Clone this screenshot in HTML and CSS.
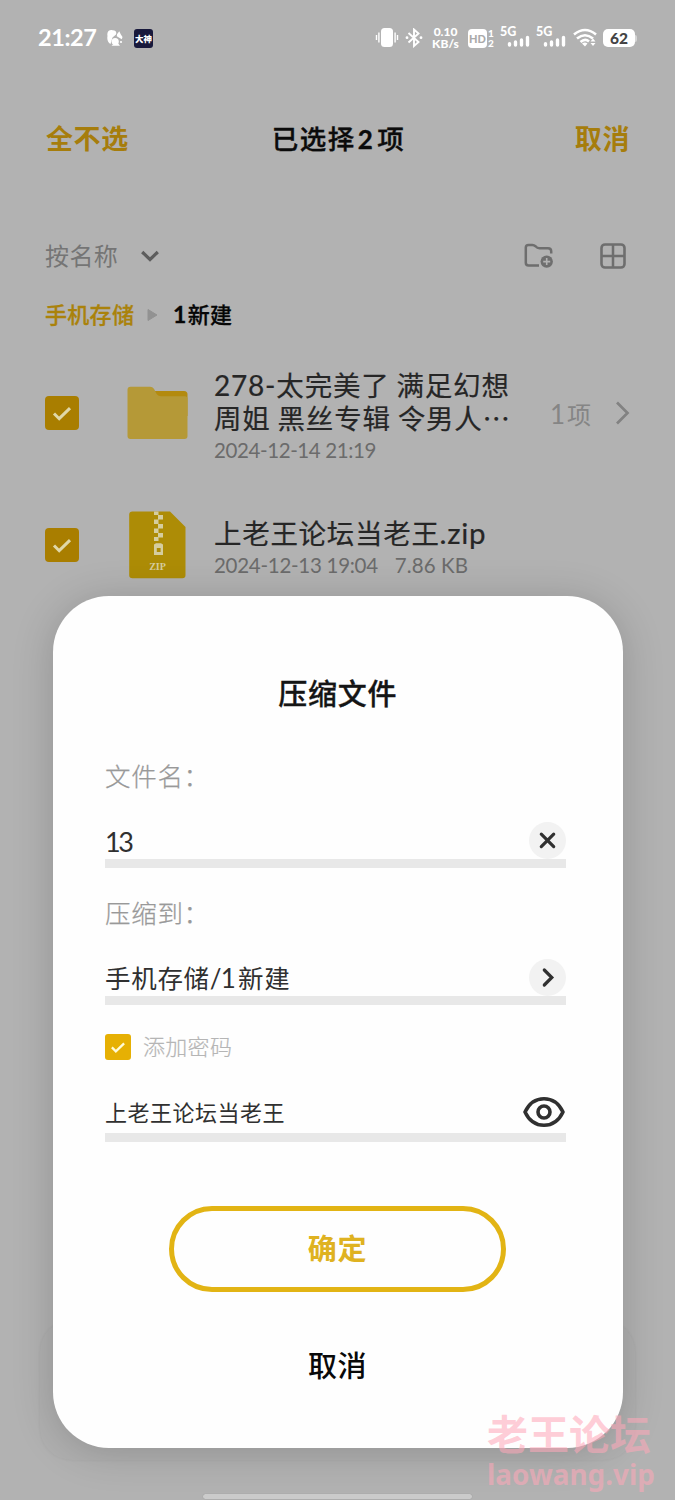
FILE: index.html
```html
<!DOCTYPE html>
<html lang="zh-CN">
<head>
<meta charset="utf-8">
<title>压缩文件</title>
<link rel="stylesheet" href="styles.css">
</head>
<body>
<div class="screen">
  <header class="status">
    <span class="clock">21:27</span>
    <svg class="squirrel" width="16" height="18" viewBox="0 0 16 18"><g fill="#fff"><path d="M.5 7C-.5 2.500 2.500.5 5.500 1.200 8.500 1 10 3 9 5.500L5.500 8.500 3.500 15C.8 13.500-.2 10 .5 7z"/><path d="M10 5.200l2.300-3 1.400 3L15.500 8l-.7 2.200-3-1.600-2-1.400z"/><circle cx="8.200" cy="12.500" r="3.600"/><path d="M4.500 16.700l3-2.500h3.500l2 2.500z"/><circle cx="14" cy="13" r="1.100"/></g></svg>
    <span class="app">大神</span>
    <span class="grow"></span>
    <svg class="vibrate" width="24" height="20" viewBox="0 0 24 20"><rect x="6" width="12" height="19" rx="3.500" fill="#fff"/><path d="M1.500 7v5M3.900 4.500v10M20.100 4.500v10M22.500 7v5" stroke="#fff" stroke-width="1.400"/></svg>
    <svg class="bt" width="18" height="20" viewBox="0 0 18 20"><path d="M3.500 5L13.500 14 9 18V1.500l4.500 4L3.500 14.500" fill="none" stroke="#fff" stroke-width="1.900"/><circle cx="2" cy="9.700" r="1.400" fill="#fff"/><circle cx="16" cy="9.700" r="1.400" fill="#fff"/></svg>
    <span class="speed"><span>0.10</span><span>KB/s</span></span>
    <span class="hd">HD</span>
    <span class="sims"><span>1</span><span>2</span></span>
    <span class="signal"><span class="gen">5G</span><svg width="29" height="20" viewBox="0 0 29 20"><path d="M8.500 15.800v1.200M14.500 14v3M20.500 12v5M26.500 9.500v7.500" stroke="#fff" stroke-width="3.400" stroke-linecap="round"/></svg></span>
    <span class="signal"><span class="gen">5G</span><svg width="29" height="20" viewBox="0 0 29 20"><path d="M8.500 15.800v1.200M14.500 14v3M20.500 12v5M26.500 9.500v7.500" stroke="#fff" stroke-width="3.400" stroke-linecap="round"/></svg></span>
    <svg class="wifi" width="24" height="20" viewBox="0 0 24 20"><g fill="none" stroke="#fff" stroke-width="2.600"><path d="M1 6.500Q12-2.500 23 6.500M4 10.500Q12 4 20 10.500M7.500 14Q12 10 16 13.500"/></g><path d="M9 15.500Q12 13.500 14.500 15.500L12 18.500zM17.500 13.500l2.500-3 2.500 3zM17.500 15l2.500 3 2.500-3z" fill="#fff"/></svg>
    <span class="battery">62</span><i class="nub"></i>
  </header>

  <nav class="header">
    <span class="gold">全不选</span>
    <h1>已选择<span class="num">2</span>项</h1>
    <span class="gold">取消</span>
  </nav>

  <div class="sort">
    <span class="by">按名称</span>
    <svg class="down" width="20" height="14" viewBox="0 0 20 14"><path d="M2.200 3L10 10.500 17.800 3" fill="none" stroke="#5d5d5d" stroke-width="3.200"/></svg>
    <span class="grow"></span>
    <svg class="newfolder" width="30" height="26" viewBox="0 0 30 26"><path d="M15 22.500H4.500Q1.800 22.500 1.800 19.800V4.500Q1.800 1.900 4.500 1.900H8.500Q10 1.900 11.500 3.200Q13.200 5.200 15.500 5.200H24Q27.200 5.200 27.200 8.200V10.500" fill="none" stroke="#6e6e6e" stroke-width="2.500"/><circle cx="22.700" cy="18.600" r="6.200" fill="#6e6e6e"/><path d="M19.200 18.600h7M22.700 15.100v7" stroke="#b2b2b2" stroke-width="1.600"/></svg>
    <svg width="26" height="26" viewBox="0 0 26 26"><rect x="1.500" y="1.500" width="23" height="23" rx="3.500" fill="none" stroke="#6e6e6e" stroke-width="2.600"/><path d="M13 2v22M2 13h22" stroke="#6e6e6e" stroke-width="2.500"/></svg>
  </div>

  <div class="crumbs">
    <span class="root">手机存储</span>
    <svg width="11" height="14" viewBox="0 0 11 14"><path d="M1 1.500L10 7 1 12.500z" fill="#929292" stroke="#929292" stroke-linejoin="round"/></svg>
    <span class="here"><span class="num">1</span>新建</span>
  </div>

  <main>
    <div class="file">
      <svg class="check" width="34" height="34" viewBox="0 0 34 34"><rect width="34" height="34" rx="4" fill="#a97e00"/><path d="M9 17.500l5.200 5.200L25 12.200" fill="none" stroke="#e0d8a8" stroke-width="3"/></svg>
      <svg class="thumb" width="61" height="54" viewBox="0 0 61 54"><path d="M24 5h33q3.500 0 3.500 3.500V30H24z" fill="#b38a0e"/><path d="M3 .8H23q3 0 4.500 3l2 4q1.300 2.400 4 2.400H58q2.500 0 2.500 2.500V50q0 3-3 3H3.500q-3 0-3-3V3.800q0-3 3-3z" fill="#b59937"/></svg>
      <div class="info">
        <div class="name"><span class="num">278-</span>太完美了 满足幻想</div>
        <div class="name">周姐 黑丝专辑 令男人⋯</div>
        <div class="meta">2024-12-14 21:19</div>
      </div>
      <span class="count"><span class="num">1</span>项</span>
      <svg width="16" height="24" viewBox="0 0 16 24"><path d="M2 1.500L12.500 12 2 22.500" fill="none" stroke="#828282" stroke-width="2.700"/></svg>
    </div>
    <div class="file">
      <svg class="check" width="34" height="34" viewBox="0 0 34 34"><rect width="34" height="34" rx="4" fill="#a97e00"/><path d="M9 17.500l5.200 5.200L25 12.200" fill="none" stroke="#e0d8a8" stroke-width="3"/></svg>
      <svg class="thumb" width="61" height="68" viewBox="0 0 61 68"><path d="M5.500.5H43L58.500 16V64q0 3.200-3.200 3.200H5.500q-3.300 0-3.300-3.300V3.800Q2.200.5 5.500.5z" fill="#ad8c06"/><g fill="#d5cd9f"><path d="M27 .5h4.500V4h4.500v4.500h-4.500V13h4.500v4.500h-4.500V22h4.500v4.500h-4.500V30H27v-4h4v-4h-4v-4.500h4V13h-4V8.500h4V4h-4z"/><path fill-rule="evenodd" d="M27 33.500l2-1.200h5l2 1.200V44h-9zM29.800 37v4h3.800v-4z"/></g><text x="30.500" y="58.500" text-anchor="middle" class="zip">ZIP</text></svg>
      <div class="info">
        <div class="name second">上老王论坛当老王<span class="num">.zip</span></div>
        <div class="meta wide">2024-12-13 19:04 <span class="size">7.86 KB</span></div>
      </div>
    </div>
  </main>

  <div class="dock"></div>
  <section class="dialog">
    <h2>压缩文件</h2>
    <div class="label">文件名：</div>
    <div class="field">
      <span class="num">13</span>
      <svg width="37" height="37" viewBox="0 0 37 37"><circle cx="18.500" cy="18.500" r="18.500" fill="#f2f2f2"/><path d="M12.300 12.200l12.400 12.400M24.700 12.200L12.300 24.600" stroke="#303030" stroke-width="3.200" stroke-linecap="round"/></svg>
    </div>
    <div class="label to">压缩到：</div>
    <div class="field target">
      <span>手机存储<span class="num path">/1</span>新建</span>
      <svg width="37" height="37" viewBox="0 0 37 37"><circle cx="18.500" cy="18.500" r="18.500" fill="#f2f2f2"/><path d="M15.300 11l7.500 7.500-7.500 7.500" fill="none" stroke="#303030" stroke-width="3.200" stroke-linecap="round"/></svg>
    </div>
    <div class="option">
      <svg width="26" height="26" viewBox="0 0 34 34"><rect width="34" height="34" rx="4" fill="#e6b004"/><path d="M9 17.500l5.200 5.200L25 12.200" fill="none" stroke="#fffbd8" stroke-width="3"/></svg>
      <span>添加密码</span>
    </div>
    <div class="field password">
      <span>上老王论坛当老王</span>
      <svg width="42" height="32" viewBox="0 0 42 32"><path d="M2 16C6 7.500 13 2.700 21 2.700S36 7.500 40 16C36 24.500 29 29.300 21 29.300S6 24.500 2 16z" fill="none" stroke="#303030" stroke-width="3.600" stroke-linejoin="round"/><circle cx="21" cy="16" r="6" fill="none" stroke="#303030" stroke-width="3.600"/></svg>
    </div>
    <div class="ok">确定</div>
    <div class="cancel">取消</div>
  </section>

  <div class="homebar"></div>
  <div class="watermark"><span>老王论坛</span><span class="site">laowang.vip</span></div>
</div>
</body>
</html>
```

FILE: styles.css
```css
* { box-sizing: border-box; }
body { margin: 0; font-family: "Noto Sans CJK SC", sans-serif; }
.screen { position: relative; width: 675px; height: 1500px; overflow: hidden; background: #b2b2b2; }
svg { flex: none; display: block; }
span, h1, h2, div { white-space: nowrap; }
h1, h2 { margin: 0; }
.grow { flex: 1; }
.num { font-family: Lato, sans-serif; }

.status { display: flex; align-items: center; height: 76px; padding: 0 38px; color: #fff; font-family: Lato, sans-serif; }
.clock { width: 60px; padding-bottom: 2px; font-size: 23.500px; font-weight: 700; line-height: 28px; letter-spacing: -.4px; }
.squirrel { margin-left: 9px; }
.app { width: 19px; height: 19px; margin-left: 11px; border-radius: 3px; background: #18193c; font: 900 8.500px/18px "Noto Sans CJK SC", sans-serif; text-align: center; }
.vibrate { margin-right: 6px; }
.bt { margin-right: 8px; }
.speed { display: flex; flex-direction: column; width: 29px; font-size: 12px; font-weight: 900; line-height: 12px; text-align: center; }
.hd { width: 19px; height: 19px; margin-left: 8px; border-radius: 4px; background: #fff; color: #aaa; font-size: 11px; font-weight: 900; line-height: 19px; text-align: center; }
.sims { display: flex; flex-direction: column; width: 8px; font-size: 10px; font-weight: 900; line-height: 10px; text-align: center; }
.signal { position: relative; margin-left: 6px; }
.signal + .signal { margin-left: 7px; }
.gen { position: absolute; left: -1px; top: -2px; font-size: 12.500px; font-weight: 900; line-height: 12px; }
.wifi { margin-left: 7px; }
.battery { width: 32px; height: 18px; margin-left: 6px; border-radius: 5px; background: #fff; color: #444; font-size: 15.500px; font-weight: 900; line-height: 18px; text-align: center; }
.nub { width: 2px; height: 7px; background: #d5d5d5; border-radius: 0 2px 2px 0; }

.header { display: grid; grid-template-columns: 1fr auto 1fr; align-items: center; height: 126px; padding: 0 45px 2px 46px; font-size: 27px; font-weight: 700; letter-spacing: .6px; line-height: 40px; }
.header h1 { padding-left: 1px; font-size: 26.500px; font-weight: 500; letter-spacing: 1.500px; color: #0b0b0b; -webkit-text-stroke: .35px; }
.header h1 .num { margin: 0 3px 0 2px; font-weight: 700; font-size: 26px; }
.gold { color: #a67d0c; }
.gold:last-child { justify-self: end; }

.sort { display: flex; align-items: center; height: 60px; margin-top: 24px; padding: 0 49px 0 45px; font-size: 24px; letter-spacing: .4px; color: #757575; }
.by { padding-bottom: 4px; }
.down { margin-left: 22px; }
.newfolder { margin-right: 46px; }

.crumbs { display: flex; align-items: center; height: 40px; margin-top: 9px; padding-left: 45px; font-size: 22px; font-weight: 500; letter-spacing: .3px; line-height: 30px; }
.root { width: 90px; padding-bottom: 4px; color: #aa820b; -webkit-text-stroke: .3px; }
.crumbs svg { margin: 0 14px 0 12px; }
.here { padding: 0 0 4px 1px; color: #060606; -webkit-text-stroke: .3px; }
.here .num { font-weight: 700; font-size: 23px; margin-right: 1px; }

main { margin-top: 12px; }
.file { display: flex; align-items: center; height: 132px; padding: 0 44px 0 45px; }
.thumb { margin-left: 48px; }
.info { flex: 1; margin-left: 26px; padding-top: 7px; }
.name { height: 33px; font-size: 27.500px; letter-spacing: .8px; line-height: 33px; color: #262626; -webkit-text-stroke: .2px; }
.name .num { font-size: 28px; line-height: 30px; }
.name.second { letter-spacing: .7px; }
.second .num { font-size: 29.500px; }
.meta { height: 32px; padding-top: 1px; font-family: Lato, sans-serif; font-size: 20.500px; letter-spacing: -.4px; line-height: 31px; color: #6b6b6b; }
.meta.wide { letter-spacing: -.28px; }
.size { margin-left: 12px; letter-spacing: .1px; }
.count { margin: 1px 24px 0 0; font-size: 24px; line-height: 32px; color: #858585; }
.count .num { margin-right: 2px; font-size: 26px; }
.zip { font: 700 10px "Liberation Serif", serif; fill: #d5cd9f; }

.dock { position: absolute; left: 40px; top: 1320px; width: 595px; height: 140px; border-radius: 32px; background: #b0b0b0; box-shadow: 0 0 3px rgba(0,0,0,.06); }
.dialog { position: absolute; left: 52.500px; top: 596px; width: 570px; height: 851.500px; padding: 76px 56.500px 0 52.500px; border-radius: 56px; background: #fefefe; box-shadow: 0 4px 42px rgba(0,0,0,.18); }
h2 { margin-right: -4.500px; font-size: 29px; font-weight: 500; letter-spacing: .7px; line-height: 40px; text-align: center; color: #151515; -webkit-text-stroke: .3px; }
.label { margin-top: 43px; font-size: 25.500px; font-weight: 300; letter-spacing: .7px; line-height: 40px; color: #999; -webkit-text-stroke: .25px; }
.label.to { margin-top: 24px; }
.field { display: flex; align-items: flex-end; justify-content: space-between; height: 52px; margin-top: 21px; border-bottom: 9px solid #e8e8e8; font-size: 25.500px; letter-spacing: .7px; line-height: 36px; color: #303030; }
.field .num { font-size: 26px; letter-spacing: -.8px; }
.field > .num { font-size: 27px; letter-spacing: -2.500px; line-height: 35px; }
.field .path { margin-right: 3px; }
.target { line-height: 35px; }
.option { display: flex; align-items: center; gap: 12px; height: 26px; margin-top: 29px; font-size: 22px; font-weight: 300; letter-spacing: .3px; line-height: 26px; color: #b5b5b5; }
.option span { padding-bottom: 4px; -webkit-text-stroke: .2px; }
.password { margin-top: 30px; font-size: 22px; letter-spacing: .5px; line-height: 44px; }
.password svg { margin: 0 1px 5px 0; }
.ok { width: 337px; height: 86px; margin: 64px 0 0 64px; border: 5.500px solid #e2b414; border-radius: 43px; font-size: 29px; font-weight: 700; letter-spacing: .8px; line-height: 72px; text-align: center; color: #dfb221; }
.cancel { margin: 52px -4px 0 0; font-size: 29px; font-weight: 500; letter-spacing: .5px; line-height: 40px; text-align: center; color: #090909; }
.homebar { position: absolute; left: 203px; top: 1494px; width: 269px; height: 5px; border-radius: 3px; background: #cbcbcb; box-shadow: 0 0 1px #888; }
.watermark { position: absolute; left: 487px; top: 1405px; display: flex; flex-direction: column; color: rgba(255,168,185,.57); font-size: 41px; font-weight: 700; line-height: 55px; }
.site { font-family: "Noto Sans", sans-serif; font-size: 27.900px; line-height: 29px; }
```
